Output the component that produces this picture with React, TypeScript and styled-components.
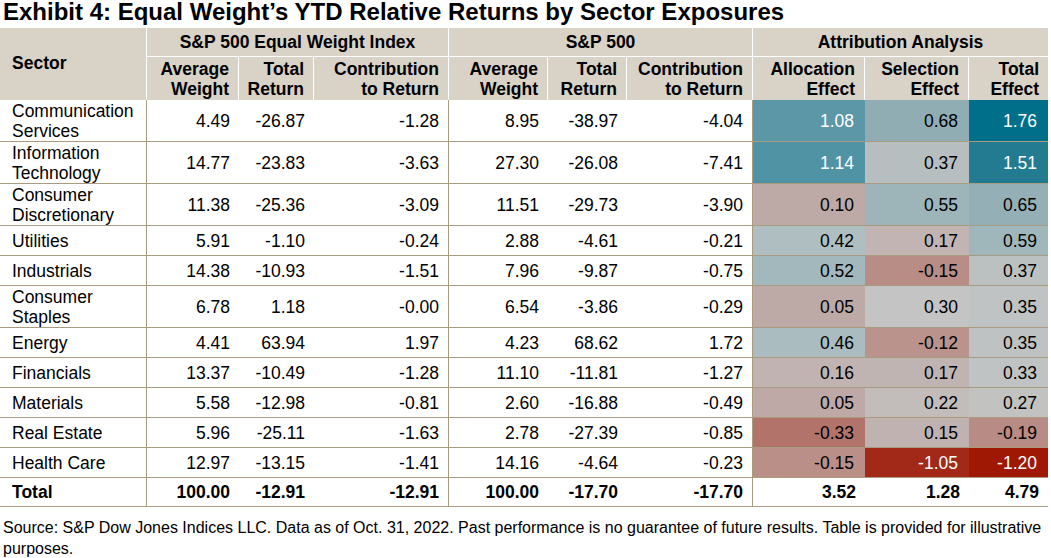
import styled, { createGlobalStyle } from 'styled-components'

type Effect = { v: string; bg: string; light?: boolean }

interface Row {
  sector: string[]
  ew: string[]
  sp: string[]
  attr: Effect[]
}

const rows: Row[] = [
  {
    sector: ['Communication', 'Services'],
    ew: ['4.49', '-26.87', '-1.28'],
    sp: ['8.95', '-38.97', '-4.04'],
    attr: [
      { v: '1.08', bg: '#5b97a6', light: true },
      { v: '0.68', bg: '#8fadb3' },
      { v: '1.76', bg: '#006f89', light: true }
    ]
  },
  {
    sector: ['Information', 'Technology'],
    ew: ['14.77', '-23.83', '-3.63'],
    sp: ['27.30', '-26.08', '-7.41'],
    attr: [
      { v: '1.14', bg: '#5093a5', light: true },
      { v: '0.37', bg: '#b7bec0' },
      { v: '1.51', bg: '#237b92', light: true }
    ]
  },
  {
    sector: ['Consumer', 'Discretionary'],
    ew: ['11.38', '-25.36', '-3.09'],
    sp: ['11.51', '-29.73', '-3.90'],
    attr: [
      { v: '0.10', bg: '#bda9a6' },
      { v: '0.55', bg: '#9db5b9' },
      { v: '0.65', bg: '#94b0b6' }
    ]
  },
  {
    sector: ['Utilities'],
    ew: ['5.91', '-1.10', '-0.24'],
    sp: ['2.88', '-4.61', '-0.21'],
    attr: [
      { v: '0.42', bg: '#afbec1' },
      { v: '0.17', bg: '#c1b4b2' },
      { v: '0.59', bg: '#9fb6ba' }
    ]
  },
  {
    sector: ['Industrials'],
    ew: ['14.38', '-10.93', '-1.51'],
    sp: ['7.96', '-9.87', '-0.75'],
    attr: [
      { v: '0.52', bg: '#a3b8bc' },
      { v: '-0.15', bg: '#b88d86' },
      { v: '0.37', bg: '#bbc0c1' }
    ]
  },
  {
    sector: ['Consumer', 'Staples'],
    ew: ['6.78', '1.18', '-0.00'],
    sp: ['6.54', '-3.86', '-0.29'],
    attr: [
      { v: '0.05', bg: '#bda9a6' },
      { v: '0.30', bg: '#c3c4c3' },
      { v: '0.35', bg: '#bfc3c4' }
    ]
  },
  {
    sector: ['Energy'],
    ew: ['4.41', '63.94', '1.97'],
    sp: ['4.23', '68.62', '1.72'],
    attr: [
      { v: '0.46', bg: '#aabcbf' },
      { v: '-0.12', bg: '#ba938c' },
      { v: '0.35', bg: '#bec2c3' }
    ]
  },
  {
    sector: ['Financials'],
    ew: ['13.37', '-10.49', '-1.28'],
    sp: ['11.10', '-11.81', '-1.27'],
    attr: [
      { v: '0.16', bg: '#c0b3b1' },
      { v: '0.17', bg: '#c0b4b2' },
      { v: '0.33', bg: '#c0c3c3' }
    ]
  },
  {
    sector: ['Materials'],
    ew: ['5.58', '-12.98', '-0.81'],
    sp: ['2.60', '-16.88', '-0.49'],
    attr: [
      { v: '0.05', bg: '#bea9a6' },
      { v: '0.22', bg: '#c2bcba' },
      { v: '0.27', bg: '#c2c2c1' }
    ]
  },
  {
    sector: ['Real Estate'],
    ew: ['5.96', '-25.11', '-1.63'],
    sp: ['2.78', '-27.39', '-0.85'],
    attr: [
      { v: '-0.33', bg: '#b2736b' },
      { v: '0.15', bg: '#c0b2b0' },
      { v: '-0.19', bg: '#b98b85' }
    ]
  },
  {
    sector: ['Health Care'],
    ew: ['12.97', '-13.15', '-1.41'],
    sp: ['14.16', '-4.64', '-0.23'],
    attr: [
      { v: '-0.15', bg: '#b98f88' },
      { v: '-1.05', bg: '#a22818', light: true },
      { v: '-1.20', bg: '#9f1803', light: true }
    ]
  }
]

const totals = {
  ew: ['100.00', '-12.91', '-12.91'],
  sp: ['100.00', '-17.70', '-17.70'],
  attr: ['3.52', '1.28', '4.79']
}

const colWidths = [147, 92, 75, 135, 99, 79, 126, 112, 104, 79]

export default function App() {
  return (
    <Page>
      <GlobalStyle />
      <Title>Exhibit 4: Equal Weight’s YTD Relative Returns by Sector Exposures</Title>
      <Table>
        <colgroup>
          {colWidths.map((w, i) => (
            <col key={i} style={{ width: w }} />
          ))}
        </colgroup>
        <thead>
          <GroupRow>
            <SectorHead rowSpan={2}>Sector</SectorHead>
            <GroupHead colSpan={3}>S&amp;P 500 Equal Weight Index</GroupHead>
            <GroupHead colSpan={3}>S&amp;P 500</GroupHead>
            <GroupHead colSpan={3} $last>
              Attribution Analysis
            </GroupHead>
          </GroupRow>
          <SubRow>
            <SubHead>Average<br />Weight</SubHead>
            <SubHead>Total<br />Return</SubHead>
            <SubHead>Contribution<br />to Return</SubHead>
            <SubHead>Average<br />Weight</SubHead>
            <SubHead>Total<br />Return</SubHead>
            <SubHead>Contribution<br />to Return</SubHead>
            <SubHead>Allocation<br />Effect</SubHead>
            <SubHead>Selection<br />Effect</SubHead>
            <SubHead $last>Total<br />Effect</SubHead>
          </SubRow>
        </thead>
        <tbody>
          {rows.map((r) => (
            <BodyRow key={r.sector.join(' ')} $tall={r.sector.length > 1}>
              <SectorCell>
                {r.sector.map((s, i) => (
                  <div key={i}>{s}</div>
                ))}
              </SectorCell>
              {r.ew.map((v, i) => (
                <NumCell key={'e' + i} $divider={i === 2}>
                  {v}
                </NumCell>
              ))}
              {r.sp.map((v, i) => (
                <NumCell key={'s' + i} $divider={i === 2}>
                  {v}
                </NumCell>
              ))}
              {r.attr.map((a, i) => (
                <EffectCell key={'a' + i} $bg={a.bg} $light={a.light}>
                  {a.v}
                </EffectCell>
              ))}
            </BodyRow>
          ))}
          <TotalRow>
            <SectorCell>Total</SectorCell>
            {totals.ew.map((v, i) => (
              <NumCell key={'e' + i} $divider={i === 2}>
                {v}
              </NumCell>
            ))}
            {totals.sp.map((v, i) => (
              <NumCell key={'s' + i} $divider={i === 2}>
                {v}
              </NumCell>
            ))}
            {totals.attr.map((v, i) => (
              <NumCell key={'a' + i}>{v}</NumCell>
            ))}
          </TotalRow>
        </tbody>
      </Table>
      <Footer>
        Source: S&amp;P Dow Jones Indices LLC. Data as of Oct. 31, 2022. Past performance is no guarantee of future
        results. Table is provided for illustrative purposes.
      </Footer>
    </Page>
  )
}

// === Styling === //
const GlobalStyle = createGlobalStyle`
  body {
    margin: 0;
    background: #ffffff;
    font-family: 'Liberation Sans', Arial, sans-serif;
    color: #000000;
  }
`

const Page = styled.div`
  width: 1051px;
  padding: 0 0 0 3px;
  box-sizing: border-box;
`

const Title = styled.h1`
  margin: 0 0 4px 0;
  font-size: 24px;
  line-height: 24px;
  font-weight: 700;
`

const Table = styled.table`
  margin-left: -3px;
  width: 1048px;
  table-layout: fixed;
  border-collapse: separate;
  border-spacing: 0;
  font-size: 17.5px;
  line-height: 20px;
`

const headBg = '#d8d2c7'
const rule = '#a99b80'

const GroupRow = styled.tr`
  height: 29px;
`

const SubRow = styled.tr`
  height: 43px;
`

const SectorHead = styled.th`
  background: ${headBg};
  text-align: left;
  padding: 0 0 2px 12px;
  font-weight: 700;
  border-right: 1px solid #ffffff;
`

const GroupHead = styled.th<{ $last?: boolean }>`
  background: ${headBg};
  text-align: center;
  font-weight: 700;
  padding: 0;
  border-bottom: 1px solid #ffffff;
  border-right: ${({ $last }) => ($last ? 'none' : '1px solid #ffffff')};
`

const SubHead = styled.th<{ $last?: boolean }>`
  background: ${headBg};
  text-align: right;
  font-weight: 700;
  padding: 0 9px 0 0;
  white-space: nowrap;
  border-right: ${({ $last }) => ($last ? 'none' : '1px solid #ffffff')};
`

const BodyRow = styled.tr<{ $tall?: boolean }>`
  height: ${({ $tall }) => ($tall ? '42px' : '30px')};
`

const TotalRow = styled.tr`
  height: 29px;
  font-weight: 700;
`

const SectorCell = styled.td`
  text-align: left;
  padding: 0 0 0 12px;
  white-space: nowrap;
  border-right: 1px solid ${rule};
  border-bottom: 1px solid ${rule};
`

const NumCell = styled.td<{ $divider?: boolean }>`
  text-align: right;
  padding: 0 9px 0 0;
  border-bottom: 1px solid ${rule};
  border-right: ${({ $divider }) => ($divider ? `1px solid ${rule}` : 'none')};
`

const EffectCell = styled.td<{ $bg: string; $light?: boolean }>`
  text-align: right;
  padding: 0 11px 0 0;
  background: ${({ $bg }) => $bg};
  color: ${({ $light }) => ($light ? '#ffffff' : '#000000')};
  border-bottom: 1px solid ${rule};
`

const Footer = styled.p`
  margin: 10px 0 0 0;
  font-size: 16px;
  line-height: 21px;
`
